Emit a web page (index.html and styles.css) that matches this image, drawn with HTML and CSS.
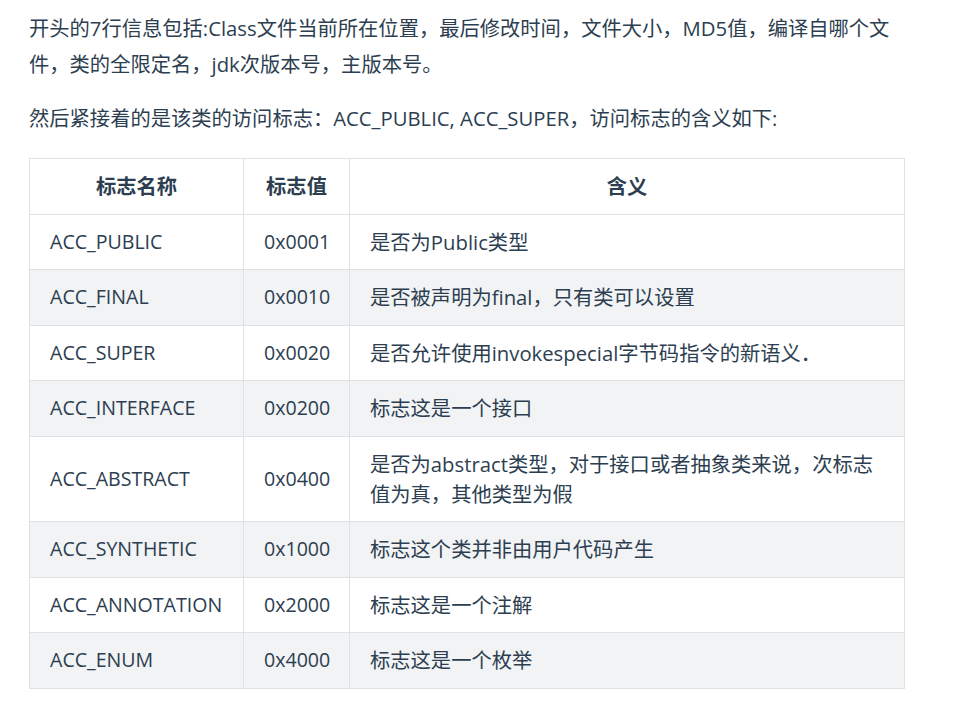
FILE: index.html
```html
<!DOCTYPE html>
<html lang="zh-CN">
<head>
<meta charset="utf-8">
<link rel="stylesheet" href="styles.css">
</head>
<body>
<div class="content">
<p>开头的7行信息包括:Class文件当前所在位置，最后修改时间，文件大小，MD5值，编译自哪个文件，类的全限定名，jdk次版本号，主版本号。</p>
<p>然后紧接着的是该类的访问标志：ACC_PUBLIC, ACC_SUPER，访问标志的含义如下:</p>
<table>
<colgroup>
<col class="c1">
<col class="c2">
<col class="c3">
</colgroup>
<thead>
<tr><th>标志名称</th><th>标志值</th><th>含义</th></tr>
</thead>
<tbody>
<tr><td>ACC_PUBLIC</td><td>0x0001</td><td>是否为Public类型</td></tr>
<tr><td>ACC_FINAL</td><td>0x0010</td><td>是否被声明为final，只有类可以设置</td></tr>
<tr><td>ACC_SUPER</td><td>0x0020</td><td>是否允许使用invokespecial字节码指令的新语义．</td></tr>
<tr><td>ACC_INTERFACE</td><td>0x0200</td><td>标志这是一个接口</td></tr>
<tr><td>ACC_ABSTRACT</td><td>0x0400</td><td>是否为abstract类型，对于接口或者抽象类来说，次标志值为真，其他类型为假</td></tr>
<tr><td>ACC_SYNTHETIC</td><td>0x1000</td><td>标志这个类并非由用户代码产生</td></tr>
<tr><td>ACC_ANNOTATION</td><td>0x2000</td><td>标志这是一个注解</td></tr>
<tr><td>ACC_ENUM</td><td>0x4000</td><td>标志这是一个枚举</td></tr>
</tbody>
</table>
</div>
</body>
</html>
```

FILE: styles.css
```css
html, body {
  margin: 0;
  padding: 0;
  background: #fff;
}
body {
  font-family: "Open Sans", "Noto Sans CJK SC", sans-serif;
  font-size: 20.3px;
  color: #2c3e50;
}
.content {
  width: 876px;
  padding: 10px 0 0 29px;
}
p {
  margin: 0 0 18px;
  line-height: 36px;
}
table {
  border-collapse: collapse;
  table-layout: fixed;
  width: 876px;
  margin-top: 22px;
  line-height: 30px;
}
.c1 { width: 214px; }
.c2 { width: 106px; }
th, td {
  border: 1px solid #dfe2e5;
  padding: 12.25px 20px;
  text-align: left;
}
td {
  font-size: 19.6px;
}
td:last-child {
  font-size: 20.3px;
}
th {
  font-weight: bold;
  text-align: center;
}
tbody tr:nth-child(odd) {
  background: #fff;
}
tbody tr:nth-child(even) {
  background: #f2f3f5;
}
```
